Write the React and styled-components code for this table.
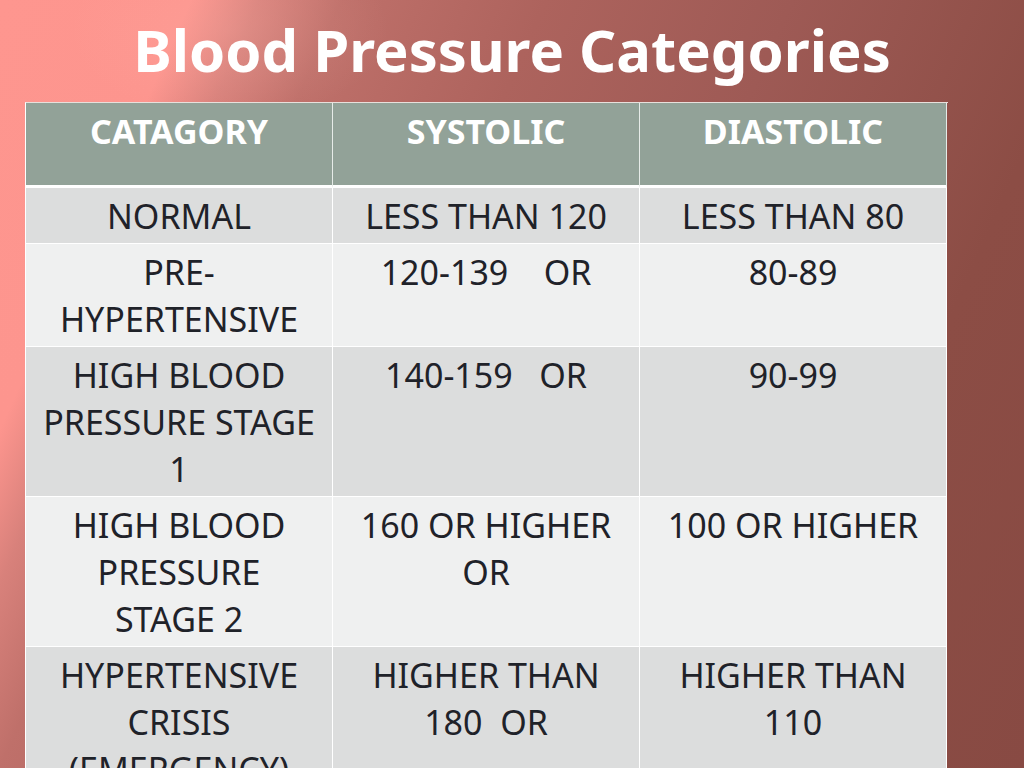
import React from 'react';
import styled, { createGlobalStyle } from 'styled-components';

const GlobalStyle = createGlobalStyle`
  html, body {
    margin: 0;
    padding: 0;
  }
  body {
    font-family: "Noto Sans", "Open Sans", sans-serif;
  }
`;

const ROWS = [
  { category: 'NORMAL', systolic: 'LESS THAN 120', diastolic: 'LESS THAN 80' },
  { category: 'PRE-\nHYPERTENSIVE', systolic: '120-139\u00a0\u00a0\u00a0 OR', diastolic: '80-89' },
  { category: 'HIGH BLOOD\nPRESSURE STAGE\n1', systolic: '140-159\u00a0\u00a0 OR', diastolic: '90-99' },
  { category: 'HIGH BLOOD\nPRESSURE\nSTAGE 2', systolic: '160 OR HIGHER\nOR', diastolic: '100 OR HIGHER' },
  { category: 'HYPERTENSIVE\nCRISIS\n(EMERGENCY)', systolic: 'HIGHER THAN\n180\u00a0 OR', diastolic: 'HIGHER THAN\n110' },
];

export default function App() {
  return (
    <>
      <GlobalStyle />
      <Slide>
        <Title>Blood Pressure Categories</Title>
        <Table>
          <HeadCell>CATAGORY</HeadCell>
          <HeadCell>SYSTOLIC</HeadCell>
          <HeadCell>DIASTOLIC</HeadCell>
          {ROWS.map((row, i) => (
            <React.Fragment key={i}>
              <Cell odd={i % 2 === 0}>{row.category}</Cell>
              <Cell odd={i % 2 === 0}>{row.systolic}</Cell>
              <Cell odd={i % 2 === 0}>{row.diastolic}</Cell>
            </React.Fragment>
          ))}
        </Table>
      </Slide>
    </>
  );
}

const Slide = styled.div`
  position: relative;
  width: 1024px;
  height: 768px;
  overflow: hidden;
  box-sizing: border-box;
  padding: 13px 0 0 25px;
  background:
    radial-gradient(ellipse 160px 90px at 230px 30px, rgba(255, 190, 180, 0.18), rgba(255, 190, 180, 0) 100%),
    linear-gradient(114deg, #fe968f 0%, #fd958e 14%, #d8817b 19%, #bf706a 25%, #ad635d 40%, #9e5a55 58%, #8c4d45 80%, #884a43 100%);
`;

const Title = styled.h1`
  margin: 0 0 0 -25px;
  width: 1024px;
  text-align: center;
  color: #ffffff;
  font-family: "Noto Sans", "Open Sans", sans-serif;
  font-weight: 700;
  font-size: 58px;
  line-height: 74px;
`;

const Table = styled.div`
  display: grid;
  grid-template-columns: 307px 307px 307px;
  width: 922px;
  margin-top: 15px;
  border-top: 1px solid #e8e0dc;
  border-left: 1px solid #ffffff;
`;

const HeadCell = styled.div`
  height: 85px;
  box-sizing: border-box;
  padding-top: 5px;
  background: #92a298;
  color: #ffffff;
  font-weight: 700;
  font-size: 34px;
  line-height: 47px;
  text-align: center;
  border-right: 1px solid #e6ebe8;
  border-bottom: 3px solid #ffffff;
`;

const Cell = styled.div`
  box-sizing: border-box;
  padding: 5px 4px 3px;
  background: ${p => (p.odd ? '#dcdddd' : '#eff0f0')};
  color: #1f2229;
  font-size: 34px;
  line-height: 47px;
  text-align: center;
  white-space: pre-line;
  border-right: 1px solid #ffffff;
  border-bottom: 1px solid #ffffff;
`;
